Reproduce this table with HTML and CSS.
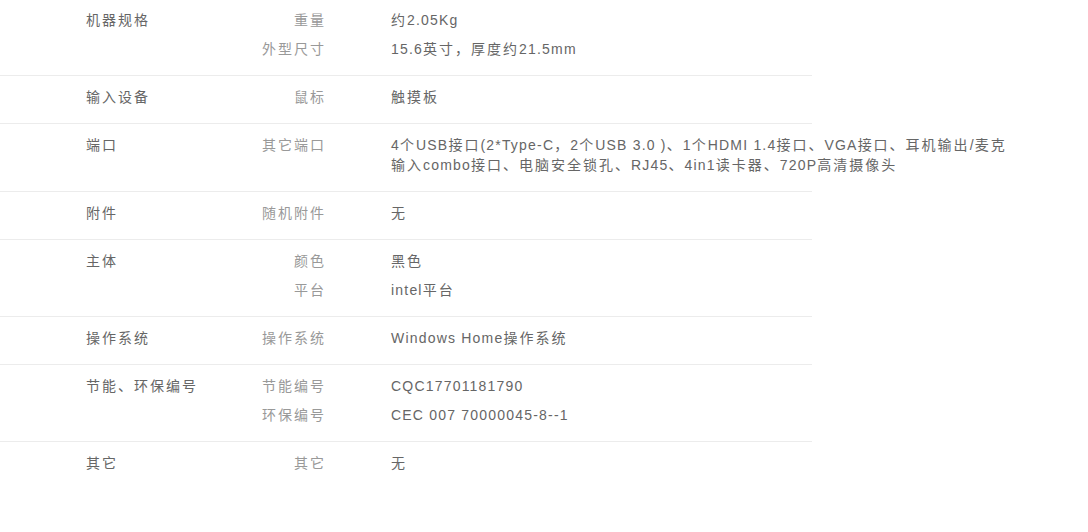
FILE: index.html
```html
<!DOCTYPE html>
<html lang="zh-CN">
<head>
<meta charset="utf-8">
<title>规格参数</title>
<link rel="stylesheet" href="styles.css">
</head>
<body>
<div class="specs">
  <div class="group">
    <div class="group-name">机器规格</div>
    <div class="items">
      <div class="item"><div class="key">重量</div><div class="val"><span class="zh">约</span>2.05Kg</div></div>
      <div class="item"><div class="key">外型尺寸</div><div class="val">15.6<span class="zh">英寸，厚度约</span>21.5mm</div></div>
    </div>
  </div>
  <div class="group">
    <div class="group-name">输入设备</div>
    <div class="items">
      <div class="item"><div class="key">鼠标</div><div class="val"><span class="zh">触摸板</span></div></div>
    </div>
  </div>
  <div class="group">
    <div class="group-name">端口</div>
    <div class="items">
      <div class="item"><div class="key">其它端口</div><div class="val">4<span class="zh">个</span>USB<span class="zh">接口</span>(2*Type-C<span class="zh">，</span>2<span class="zh">个</span>USB 3.0 )<span class="zh">、</span>1<span class="zh">个</span>HDMI 1.4<span class="zh">接口、</span>VGA<span class="zh">接口、耳机输出</span>/<span class="zh">麦克输入</span>combo<span class="zh">接口、电脑安全锁孔、</span>RJ45<span class="zh">、</span>4in1<span class="zh">读卡器、</span>720P<span class="zh">高清摄像头</span></div></div>
    </div>
  </div>
  <div class="group">
    <div class="group-name">附件</div>
    <div class="items">
      <div class="item"><div class="key">随机附件</div><div class="val"><span class="zh">无</span></div></div>
    </div>
  </div>
  <div class="group">
    <div class="group-name">主体</div>
    <div class="items">
      <div class="item"><div class="key">颜色</div><div class="val"><span class="zh">黑色</span></div></div>
      <div class="item"><div class="key">平台</div><div class="val">intel<span class="zh">平台</span></div></div>
    </div>
  </div>
  <div class="group">
    <div class="group-name">操作系统</div>
    <div class="items">
      <div class="item"><div class="key">操作系统</div><div class="val">Windows Home<span class="zh">操作系统</span></div></div>
    </div>
  </div>
  <div class="group">
    <div class="group-name">节能、环保编号</div>
    <div class="items">
      <div class="item"><div class="key">节能编号</div><div class="val">CQC17701181790</div></div>
      <div class="item"><div class="key">环保编号</div><div class="val">CEC 007 70000045-8--1</div></div>
    </div>
  </div>
  <div class="group">
    <div class="group-name">其它</div>
    <div class="items">
      <div class="item"><div class="key">其它</div><div class="val"><span class="zh">无</span></div></div>
    </div>
  </div>
</div>
</body>
</html>
```

FILE: styles.css
```css
html, body {
  margin: 0;
  padding: 0;
  background: #fff;
}

body {
  font-family: "Liberation Sans", Arial, "Noto Sans CJK SC", sans-serif;
  font-size: 14px;
  letter-spacing: 1.2px;
  color: #666;
}

.specs {
  width: 812px;
  margin-top: -1px;
}

.group {
  display: flex;
  padding: 11px 0 7px 86px;
  border-bottom: 1px solid #ececec;
}

.group:last-child {
  border-bottom: none;
}

.group-name {
  width: 160px;
  flex-shrink: 0;
  line-height: 20px;
  letter-spacing: 2px;
  white-space: nowrap;
  color: #666;
}

.items {
  display: flex;
  flex-direction: column;
  margin-left: -60px;
}

.item {
  display: flex;
  margin-bottom: 9px;
  line-height: 20px;
}

.key {
  width: 140px;
  flex-shrink: 0;
  text-align: right;
  letter-spacing: 2px;
  color: #999;
}

.val {
  width: 626px;
  flex-shrink: 0;
  margin-left: 65px;
  color: #666;
}

.zh {
  letter-spacing: 2px;
}
```
